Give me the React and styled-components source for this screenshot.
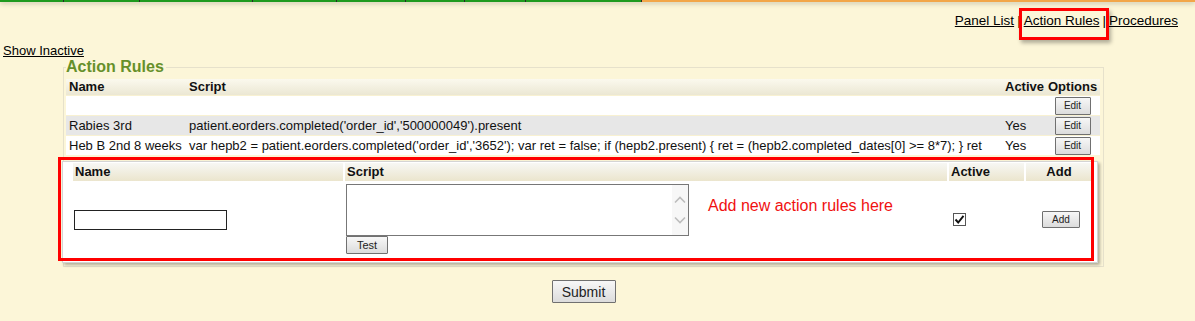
import styled, { createGlobalStyle } from "styled-components";

const GlobalStyle = createGlobalStyle`
  body {
    margin: 0;
    background: #fcf6d8;
    font-family: "Liberation Sans", Arial, sans-serif;
    font-size: 13px;
    color: #111;
  }
`;

const TopBar = styled.div`
  display: flex;
  height: 2px;
  box-shadow: 0 1px 5px rgba(0, 0, 0, 0.35);
`;

const Segment = styled.div`
  width: ${(props) => (props.w ? `${props.w}px` : "auto")};
  flex: ${(props) => (props.w ? "none" : "1")};
  background: ${(props) => props.color};
  border-right: ${(props) => (props.w ? "1px solid #2a2a2a" : "none")};
`;

const Nav = styled.div`
  display: flex;
  justify-content: flex-end;
  align-items: center;
  margin-top: 11px;
  padding-right: 17px;
  font-size: 13.5px;
  line-height: 15px;
`;

const NavLink = styled.a`
  position: relative;
  color: #000;
  text-decoration: underline;
  cursor: pointer;
`;

const Sep = styled.span`
  margin: 0 3px;
  color: #000;
`;

const Highlight = styled.span`
  position: absolute;
  left: -5px;
  top: -5px;
  width: 90px;
  height: 32px;
  box-sizing: border-box;
  border: 3px solid #f00;
  box-shadow: 2px 3px 4px rgba(0, 0, 0, 0.3);
  pointer-events: none;
`;

const ShowInactive = styled.a`
  display: block;
  margin-top: 15px;
  padding-left: 3px;
  line-height: 15px;
  color: #000;
  text-decoration: underline;
  cursor: pointer;
  width: max-content;
`;

const Fieldset = styled.fieldset`
  margin: 0 0 0 63px;
  width: 1041px;
  box-sizing: border-box;
  border: 1px solid #e6e1cb;
  padding: 3px 3px 3px 2px;
`;

const Legend = styled.legend`
  padding: 0 2px 0 0;
  font-size: 16px;
  font-weight: bold;
  line-height: 18px;
  color: #66902a;
`;

const RulesTable = styled.table`
  width: 100%;
  border-collapse: collapse;
  table-layout: fixed;
`;

const Th = styled.th`
  text-align: left;
  font-weight: bold;
  padding: 0 3px;
  height: 16px;
  line-height: 16px;
  white-space: nowrap;
  background: linear-gradient(#fbf9ee, #ebe7d3);
`;

const Row = styled.tr`
  background: ${(props) => (props.shaded ? "#e7e7e7" : "#fff")};
  border-top: 1px solid #f8f1d2;
`;

const Td = styled.td`
  height: 19px;
  padding: 0 3px;
  white-space: nowrap;
  text-align: ${(props) => props.align || "left"};
  vertical-align: middle;
`;

const Button = styled.button`
  width: ${(props) => props.w}px;
  height: ${(props) => props.h}px;
  padding: 0;
  font-family: "Liberation Sans", Arial, sans-serif;
  font-size: ${(props) => props.fs}px;
  color: #222;
  background: linear-gradient(#f7f7f7, #dcdcdc);
  border: 1px solid #707070;
  border-radius: 1px;
  cursor: pointer;
  vertical-align: middle;
`;

const AddBox = styled.div`
  position: relative;
  margin: 6px 2px 0 -4px;
  padding: 1px 5px 4px 10px;
  background: #fff;
  border: 1px solid #d4d4d4;
  box-shadow: 2px 2px 3px rgba(0, 0, 0, 0.3);
`;

const AddGrid = styled.div`
  display: grid;
  grid-template-columns: 270px 602px 75px 66px;
  column-gap: 2px;
`;

const AddHead = styled.div`
  height: 18px;
  line-height: 18px;
  padding: 0 2px;
  font-weight: bold;
  text-align: ${(props) => props.align || "left"};
  background: linear-gradient(#f7f7f4, #ebe5cd);
`;

const Cell = styled.div`
  height: 77px;
  display: flex;
  align-items: ${(props) => (props.top ? "flex-start" : "center")};
  justify-content: ${(props) => props.justify || "flex-start"};
  padding: ${(props) => props.pad || "0"};
  box-sizing: border-box;
`;

const NameInput = styled.input`
  width: 153px;
  height: 20px;
  box-sizing: border-box;
  margin-left: 1px;
  border: 1px solid #222;
  padding: 1px 3px;
  font-family: inherit;
  font-size: 13px;
`;

const ScriptCol = styled.div`
  display: flex;
  flex-direction: column;
  align-items: flex-start;
  margin-left: 1px;
`;

const TextBox = styled.div`
  display: flex;
  width: 343px;
  height: 52px;
  box-sizing: border-box;
  border: 1px solid #777;
  background: #fff;
`;

const ScriptArea = styled.textarea`
  flex: 1;
  border: none;
  resize: none;
  outline: none;
  padding: 2px;
  font-family: inherit;
  font-size: 13px;
`;

const ScrollTrack = styled.div`
  width: 16px;
  background: #f7f7f7;
  display: flex;
  flex-direction: column;
  align-items: center;
  justify-content: center;
  gap: 12px;
`;

const Note = styled.span`
  margin: 13px 0 0 19px;
  font-size: 16px;
  line-height: 18px;
  color: #f01010;
  white-space: nowrap;
`;

const CheckBox = styled.span`
  display: inline-flex;
  align-items: center;
  justify-content: center;
  width: 13px;
  height: 13px;
  box-sizing: border-box;
  margin-left: 4px;
  border: 1px solid #555;
  background: #fff;
`;

const Annotation = styled.span`
  position: absolute;
  left: -5px;
  top: -5px;
  width: 1036px;
  height: 104px;
  box-sizing: border-box;
  border: 3px solid #f00;
  pointer-events: none;
`;

const SubmitRow = styled.div`
  width: 1041px;
  margin: 13px 0 0 63px;
  display: flex;
  justify-content: center;
`;

const Chevron = ({ up }) => (
  <svg width="14" height="9" viewBox="0 0 14 9">
    <polyline
      points={up ? "2,7.5 7,2.5 12,7.5" : "2,1.5 7,6.5 12,1.5"}
      fill="none"
      stroke="#bdbdbd"
      strokeWidth="1.6"
    />
  </svg>
);

const segments = [
  { w: 63, color: "#1e9a1e" },
  { w: 75, color: "#1e9a1e" },
  { w: 112, color: "#1e9a1e" },
  { w: 83, color: "#1e9a1e" },
  { w: 68, color: "#1e9a1e" },
  { w: 58, color: "#1e9a1e" },
  { w: 60, color: "#1e9a1e" },
  { w: 115, color: "#1e9a1e" },
  { color: "#f2a649" },
];

const rules = [
  { name: "", script: "", active: "" },
  {
    name: "Rabies 3rd",
    script: "patient.eorders.completed('order_id','500000049').present",
    active: "Yes",
  },
  {
    name: "Heb B 2nd 8 weeks",
    script:
      "var hepb2 = patient.eorders.completed('order_id','3652'); var ret = false; if (hepb2.present) { ret = (hepb2.completed_dates[0] >= 8*7); } ret",
    active: "Yes",
  },
];

const App = () => {
  return (
    <>
      <GlobalStyle />
      <TopBar>
        {segments.map((s, i) => (
          <Segment key={i} w={s.w} color={s.color} />
        ))}
      </TopBar>
      <Nav>
        <NavLink>Panel List</NavLink>
        <Sep>|</Sep>
        <NavLink>
          Action Rules
          <Highlight />
        </NavLink>
        <Sep>|</Sep>
        <NavLink>Procedures</NavLink>
      </Nav>
      <ShowInactive>Show Inactive</ShowInactive>
      <Fieldset>
        <Legend>Action Rules</Legend>
        <RulesTable>
          <colgroup>
            <col style={{ width: "120px" }} />
            <col />
            <col style={{ width: "43px" }} />
            <col style={{ width: "55px" }} />
          </colgroup>
          <thead>
            <tr>
              <Th>Name</Th>
              <Th>Script</Th>
              <Th>Active</Th>
              <Th>Options</Th>
            </tr>
          </thead>
          <tbody>
            {rules.map((r, i) => (
              <Row key={i} shaded={i === 1}>
                <Td>{r.name}</Td>
                <Td>{r.script}</Td>
                <Td>{r.active}</Td>
                <Td align="center">
                  <Button w={36} h={18} fs={10}>
                    Edit
                  </Button>
                </Td>
              </Row>
            ))}
          </tbody>
        </RulesTable>
        <AddBox>
          <AddGrid>
            <AddHead>Name</AddHead>
            <AddHead>Script</AddHead>
            <AddHead>Active</AddHead>
            <AddHead align="center">Add</AddHead>
            <Cell>
              <NameInput type="text" />
            </Cell>
            <Cell top pad="3px 0 0 0">
              <ScriptCol>
                <TextBox>
                  <ScriptArea />
                  <ScrollTrack>
                    <Chevron up />
                    <Chevron />
                  </ScrollTrack>
                </TextBox>
                <Button w={42} h={18} fs={11}>
                  Test
                </Button>
              </ScriptCol>
              <Note>Add new action rules here</Note>
            </Cell>
            <Cell>
              <CheckBox>
                <svg width="11" height="11" viewBox="0 0 11 11">
                  <polyline
                    points="1.5,5.5 4.2,8.5 9.5,1.8"
                    fill="none"
                    stroke="#111"
                    strokeWidth="1.9"
                  />
                </svg>
              </CheckBox>
            </Cell>
            <Cell justify="center" pad="0 0 0 4px">
              <Button w={38} h={17} fs={10}>
                Add
              </Button>
            </Cell>
          </AddGrid>
          <Annotation />
        </AddBox>
      </Fieldset>
      <SubmitRow>
        <Button w={64} h={23} fs={14}>
          Submit
        </Button>
      </SubmitRow>
    </>
  );
};

export default App;
